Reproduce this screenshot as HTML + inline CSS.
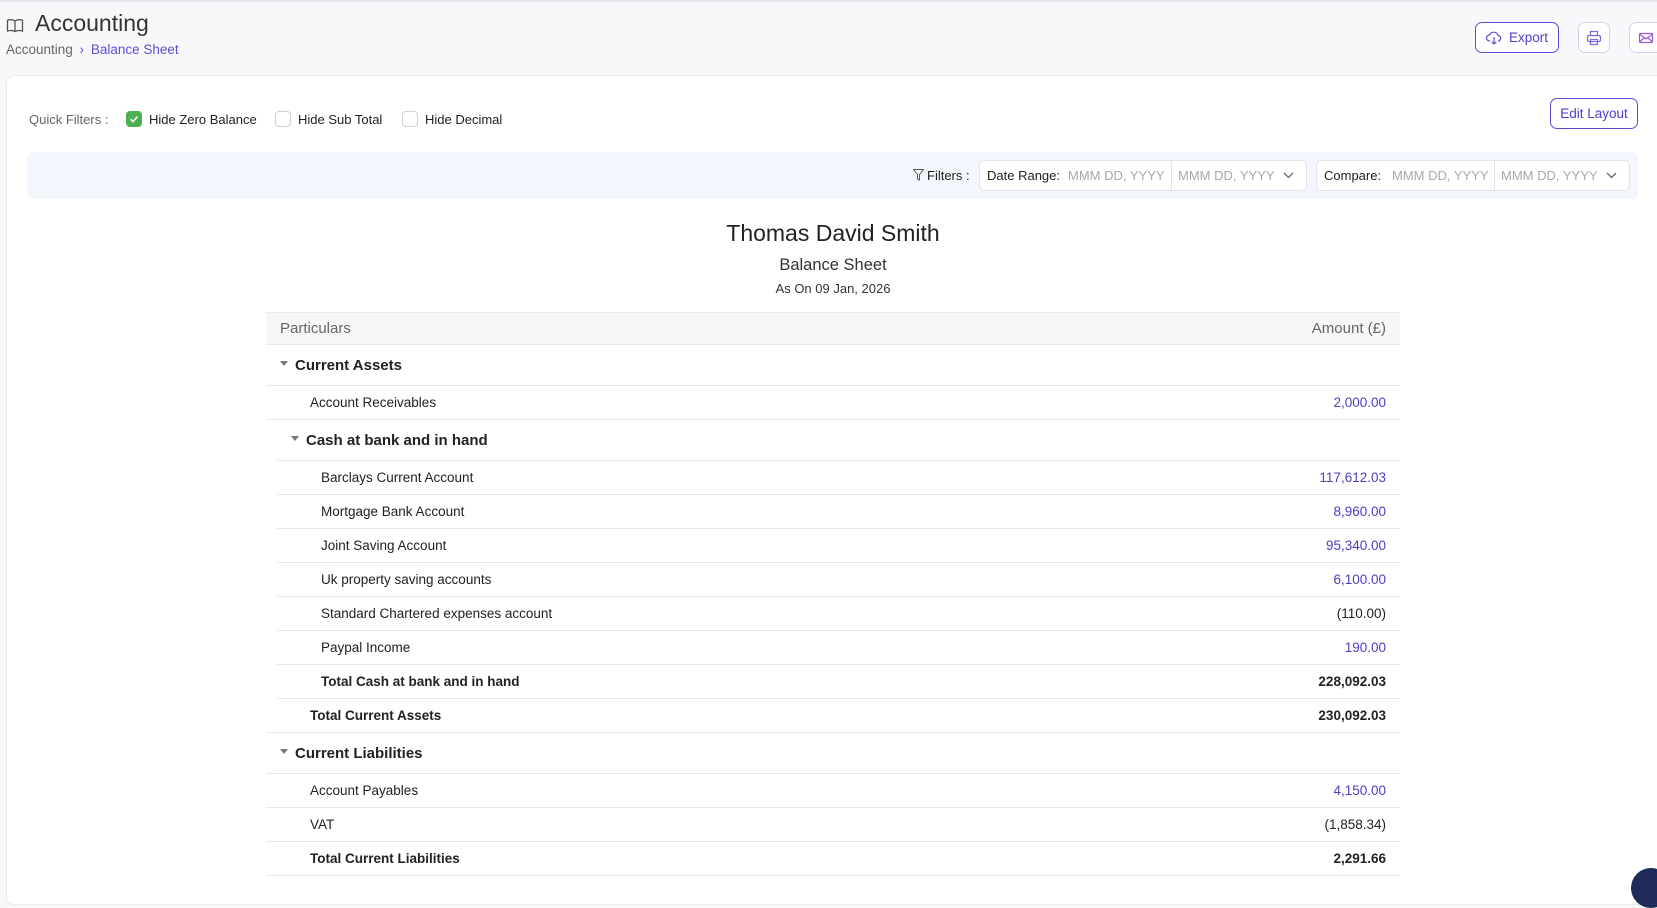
<!DOCTYPE html>
<html><head><meta charset="utf-8"><style>
*{box-sizing:border-box;margin:0;padding:0}
body{width:1657px;height:880px;overflow:hidden;background:#f8f8fa;font-family:"Liberation Sans",Arial,sans-serif;color:#222;position:relative}
.abs{position:absolute}
.topline{left:0;top:0;width:1657px;height:2px;background:#e6e6ea}
.card{left:6px;top:75px;width:1670px;height:830px;background:#fff;border:1px solid #ebebef;border-radius:8px}
.btn{border:1px solid #5b4fd6;border-radius:7px;background:#fff;color:#4b3fc8;font-size:13.5px;display:flex;align-items:center;justify-content:center}
.ibtn{border:1px solid #d4d2f2;border-radius:7px;background:#fff;display:flex;align-items:center;justify-content:center}
.cb{width:16px;height:16px;border:1px solid #cfcfd6;border-radius:4px;background:#fff}
.qf{font-size:13px;top:112px}
.fbar{left:27px;top:152px;width:1611px;height:47px;background:#f3f6fc;border-radius:6px}
.box{top:160px;height:31px;background:#fff;border:1px solid #e1e4ea;border-radius:5px;font-size:13px}
.ph{color:#a8a8ae}
table{position:absolute;left:266px;top:312px;width:1134px;border-collapse:collapse;font-size:13.5px}
td{padding:0 14px;border-bottom:1px solid #e6e7eb;height:34px;white-space:nowrap}
.hd td{background:#f7f7f9;color:#666;font-size:15px;height:32px;border-top:1px solid #ececf0}
.grp td{font-weight:bold;font-size:15px;height:41px;color:#222}
.num{text-align:right;color:#4b3fc0}
.neg{text-align:right;color:#222}
.tot td{font-weight:bold}
.tot .num{color:#222}
.arr{display:inline-block;width:0;height:0;border-left:4px solid transparent;border-right:4px solid transparent;border-top:5px solid #777;margin-right:7px;vertical-align:middle;position:relative;top:-2px}
.nest td:first-child{border-bottom:none;position:relative}
.nest td:first-child::after{content:"";position:absolute;left:11px;right:0;bottom:0;border-bottom:1px solid #e6e7eb}
</style></head><body>
<div class="abs topline"></div>
<svg class="abs" style="left:6px;top:18px" width="18" height="15" viewBox="0 0 18 15" fill="none" stroke="#555" stroke-width="1.3"><path d="M9 3C7 1.5 4 1.5 1.5 2.2V13C4 12.3 7 12.3 9 13.6C11 12.3 14 12.3 16.5 13V2.2C14 1.5 11 1.5 9 3Z"/><path d="M9 3V13.6"/></svg>
<div class="abs" style="left:35px;top:10px;font-size:23px;color:#333">Accounting</div>
<div class="abs" style="left:6px;top:42px;font-size:13.5px;color:#666">Accounting <span style="color:#5b4fd6;margin:0 3px">›</span> <span style="color:#5b4fd6">Balance Sheet</span></div>
<div class="abs btn" style="left:1475px;top:22px;width:84px;height:31px"><svg width="16" height="14" viewBox="0 0 16 14" fill="none" stroke="#5b4fd6" stroke-width="1.2" style="margin-right:7px"><path d="M4 10H3.5A3 3 0 0 1 3.5 4 4.5 4.5 0 0 1 12 4.5 2.8 2.8 0 0 1 12.5 10H12"/><path d="M8 6V13M5.8 11 8 13 10.2 11"/></svg>Export</div>
<div class="abs ibtn" style="left:1578px;top:22px;width:32px;height:31px"><svg width="16" height="16" viewBox="0 0 16 16" fill="none" stroke="#7a6ee0" stroke-width="1.2"><rect x="4.5" y="1.5" width="7" height="4"/><rect x="1.5" y="5.5" width="13" height="6" rx="1.5"/><rect x="4.5" y="9.5" width="7" height="5"/></svg></div>
<div class="abs ibtn" style="left:1629px;top:22px;width:40px;height:31px;justify-content:flex-start;padding-left:8px"><svg width="16" height="14" viewBox="0 0 16 14" fill="none" stroke="#9a5ad8" stroke-width="1.2"><rect x="1.5" y="2.5" width="13" height="9" rx="1"/><path d="M1.5 3 8 8 14.5 3M1.5 11 6 7M14.5 11 10 7"/></svg></div>
<div class="abs card"></div>
<div class="abs btn" style="left:1550px;top:98px;width:88px;height:31px">Edit Layout</div>
<div class="abs qf" style="left:29px;color:#666">Quick Filters :</div>
<div class="abs cb" style="left:126px;top:111px;background:#4caf50;border-color:#4caf50"><svg width="14" height="14" viewBox="0 0 14 14" fill="none" stroke="#fff" stroke-width="1.6"><path d="M3.5 7.2 6 9.6 10.5 4.5"/></svg></div>
<div class="abs qf" style="left:149px">Hide Zero Balance</div>
<div class="abs cb" style="left:275px;top:111px"></div>
<div class="abs qf" style="left:298px">Hide Sub Total</div>
<div class="abs cb" style="left:402px;top:111px"></div>
<div class="abs qf" style="left:425px">Hide Decimal</div>
<div class="abs fbar"></div>
<svg class="abs" style="left:913px;top:169px" width="11" height="12" viewBox="0 0 11 12" fill="none" stroke="#555" stroke-width="1"><path d="M0.5 0.5H10.5L6.5 5.5V11L4.5 10V5.5Z"/></svg>
<div class="abs" style="left:927px;top:168px;font-size:13px">Filters :</div>
<div class="abs box" style="left:979px;width:328px"><span class="abs" style="left:7px;top:7px">Date Range:</span><span class="abs ph" style="left:88px;top:7px;width:102px;overflow:hidden">MMM DD, YYYY</span><span class="abs" style="left:191px;top:0;width:1px;height:29px;background:#e1e4ea"></span><span class="abs ph" style="left:198px;top:7px">MMM DD, YYYY</span><svg class="abs" style="left:303px;top:11px" width="11" height="7" viewBox="0 0 11 7" fill="none" stroke="#666" stroke-width="1.3"><path d="M1 1 5.5 5.5 10 1"/></svg></div>
<div class="abs box" style="left:1316px;width:314px"><span class="abs" style="left:7px;top:7px">Compare:</span><span class="abs ph" style="left:75px;top:7px;width:101px;overflow:hidden">MMM DD, YYYY</span><span class="abs" style="left:177px;top:0;width:1px;height:29px;background:#e1e4ea"></span><span class="abs ph" style="left:184px;top:7px">MMM DD, YYYY</span><svg class="abs" style="left:289px;top:11px" width="11" height="7" viewBox="0 0 11 7" fill="none" stroke="#666" stroke-width="1.3"><path d="M1 1 5.5 5.5 10 1"/></svg></div>
<div class="abs" style="left:0;width:1666px;top:220px;text-align:center;font-size:23px;color:#222">Thomas David Smith</div>
<div class="abs" style="left:0;width:1666px;top:256px;text-align:center;font-size:16.5px;color:#333">Balance Sheet</div>
<div class="abs" style="left:0;width:1666px;top:281px;text-align:center;font-size:13px;color:#333">As On 09 Jan, 2026</div>
<table>
<tr class="hd"><td>Particulars</td><td style="text-align:right">Amount (£)</td></tr>
<tr class="grp"><td><span class="arr"></span>Current Assets</td><td></td></tr>
<tr><td style="padding-left:44px">Account Receivables</td><td class="num">2,000.00</td></tr>
<tr class="grp nest"><td style="padding-left:25px"><span class="arr"></span>Cash at bank and in hand</td><td></td></tr>
<tr class="nest"><td style="padding-left:55px">Barclays Current Account</td><td class="num">117,612.03</td></tr>
<tr class="nest"><td style="padding-left:55px">Mortgage Bank Account</td><td class="num">8,960.00</td></tr>
<tr class="nest"><td style="padding-left:55px">Joint Saving Account</td><td class="num">95,340.00</td></tr>
<tr class="nest"><td style="padding-left:55px">Uk property saving accounts</td><td class="num">6,100.00</td></tr>
<tr class="nest"><td style="padding-left:55px">Standard Chartered expenses account</td><td class="neg">(110.00)</td></tr>
<tr class="nest"><td style="padding-left:55px">Paypal Income</td><td class="num">190.00</td></tr>
<tr class="nest tot"><td style="padding-left:55px">Total Cash at bank and in hand</td><td class="num">228,092.03</td></tr>
<tr class="tot"><td style="padding-left:44px">Total Current Assets</td><td class="num">230,092.03</td></tr>
<tr class="grp"><td><span class="arr"></span>Current Liabilities</td><td></td></tr>
<tr><td style="padding-left:44px">Account Payables</td><td class="num">4,150.00</td></tr>
<tr><td style="padding-left:44px">VAT</td><td class="neg">(1,858.34)</td></tr>
<tr class="tot"><td style="padding-left:44px">Total Current Liabilities</td><td class="num">2,291.66</td></tr>
</table>
<div class="abs" style="left:1631px;top:868px;width:40px;height:40px;border-radius:50%;background:#1e2a5a"></div>
</body></html>
